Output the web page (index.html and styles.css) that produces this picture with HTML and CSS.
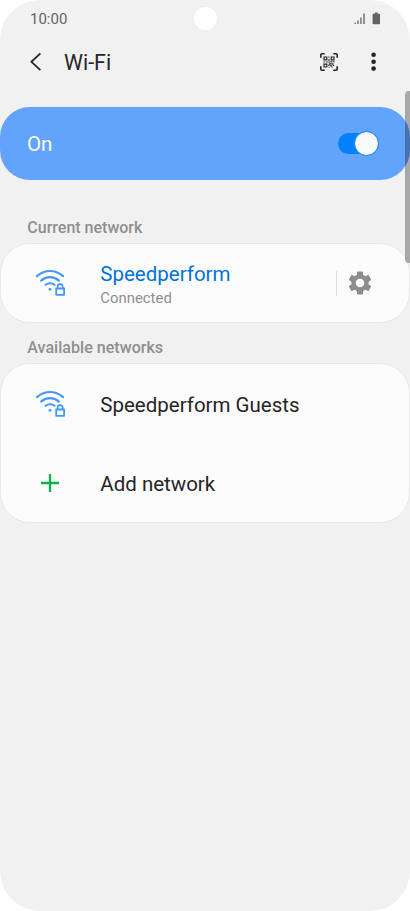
FILE: index.html
```html
<!DOCTYPE html>
<html lang="en">
<head>
<meta charset="utf-8">
<title>Wi-Fi</title>
<link rel="stylesheet" href="styles.css">
</head>
<body>
<svg class="defs" width="0" height="0" aria-hidden="true">
  <symbol id="wifi-lock" viewBox="0 0 30 28">
    <g fill="none" stroke="#4397fc" stroke-width="2.100" stroke-linecap="round">
      <path d="M1.9 7.1Q8 2 15 2T28.1 7.1"/>
      <path d="M6.1 11.600Q10 8.100 15 8.100T23.900 11.600"/>
      <path d="M10.500 15.800Q12.400 14.300 15 14.300T19.500 15.800"/>
      <path d="M21.200 19.500h7.900v6.300h-7.900z" stroke-width="1.800" stroke-linejoin="round"/>
      <path d="M22.600 19.200v-1.500a2.550 2.550 0 0 1 5.100 0v1.500" stroke-width="1.700"/>
    </g>
    <circle cx="15" cy="20.300" r="1.400" fill="#4397fc"/>
  </symbol>
</svg>
<main class="phone">
  <div class="status">
    <span class="time">10:00</span>
    <span class="camera"></span>
    <svg class="status-icons" width="28" height="14" viewBox="0 0 28 14">
      <g fill="#646464">
        <path d="M.5 10.500h1.300V12H.5zM3.300 8.500h1.300V12H3.300zM6.300 5.500h1.300V12H6.300zM9.300 1.500h1.400V12H9.300z"/>
        <path d="M20.800.5h3v1.300h1.400q.8 0 .8.8v8.900q0 .8-.8.8h-5.800q-.8 0-.8-.8V2.600q0-.8.800-.8h1.400z"/>
      </g>
    </svg>
  </div>
  <header class="header">
    <svg class="back" width="14" height="20" viewBox="0 0 14 20"><path d="M12.400 1.400L3.400 9.800L12.400 18.200" fill="none" stroke="#252525" stroke-width="1.800"/></svg>
    <h1 class="title">Wi-Fi</h1>
    <svg class="qr" width="18" height="18" viewBox="0 0 18 18">
      <path d="M.8 4.700V2Q.8.8 2 .8h2.700M13.300.8H16q1.200 0 1.200 1.200v2.700M17.200 13.300V16q0 1.200-1.200 1.200h-2.700M4.700 17.200H2Q.8 17.200.8 16v-2.700" fill="none" stroke="#252525" stroke-width="1.600"/>
      <path d="M4 4h2.800v2.800H4zM11.200 4H14v2.800h-2.800zM4 11.200h2.800V14H4z" fill="none" stroke="#252525" stroke-width="1.200"/>
      <path d="M8.400 3.400h1.100v1.300H8.400zM8.400 5.900h1.100v2H8.400zM3.400 8.400h1.300v1.200H3.400zM5.700 8.400h2v1.200h-2zM8.500 8.500h1.400v1.200H8.500zM10.500 8h1.300v1.500h-1.300zM12.500 8.300h2v1h-2zM9.300 10h1.500v1.700H9.300zM8.300 11.600h1.200v1.300H8.300zM11.300 10.300h2.200v1.200h-2.200zM10.300 12h1.500v1.500h-1.500zM12.700 11.800h1.500v1.100h-1.500zM11.500 13.500h1.200v1.100h-1.200zM8.500 13.700h1.200v.9H8.500z" fill="#252525"/>
    </svg>
    <svg class="more" width="6" height="20" viewBox="0 0 6 20"><g fill="#252525"><circle cx="2.600" cy="2.800" r="2.300"/><circle cx="2.600" cy="9.700" r="2.300"/><circle cx="2.600" cy="16.600" r="2.300"/></g></svg>
  </header>
  <section class="power">
    <span class="power-text">On</span>
    <span class="switch"><span class="knob"></span></span>
  </section>
  <h2 class="label label-current">Current network</h2>
  <section class="card">
    <div class="row">
      <svg class="icon" width="30" height="28"><use href="#wifi-lock"/></svg>
      <div class="network">
        <span class="name active">Speedperform</span>
        <span class="state">Connected</span>
      </div>
      <span class="divider"></span>
      <svg class="gear" width="24" height="24" viewBox="0 0 24 24"><path transform="translate(12 12) scale(1.190) translate(-12 -12)" fill="#8d8d8d" d="M19.140 12.940c.04-.3.060-.61.060-.94 0-.32-.02-.64-.07-.94l2.030-1.580c.18-.14.230-.41.120-.61l-1.920-3.320c-.12-.22-.37-.29-.59-.22l-2.390.96c-.5-.38-1.030-.7-1.620-.94l-.36-2.540c-.04-.24-.24-.41-.48-.41h-3.840c-.24 0-.43.170-.47.410l-.36 2.540c-.59.240-1.130.57-1.620.94l-2.390-.96c-.22-.08-.47 0-.59.220L2.740 8.870c-.12.210-.08.470.120.610l2.030 1.580c-.05.300-.09.630-.09.940s.02.640.07.940l-2.030 1.580c-.18.140-.23.410-.12.610l1.920 3.320c.12.220.37.290.59.220l2.390-.96c.5.380 1.030.7 1.620.94l.36 2.540c.05.240.24.410.48.410h3.840c.24 0 .44-.17.470-.41l.36-2.540c.59-.24 1.130-.56 1.620-.94l2.390.96c.22.080.47 0 .59-.22l1.920-3.320c.12-.22.070-.47-.12-.61l-2.010-1.580zM12 15.600c-1.980 0-3.600-1.620-3.600-3.600s1.620-3.600 3.600-3.600 3.600 1.620 3.600 3.600-1.620 3.600-3.600 3.600z"/></svg>
    </div>
  </section>
  <h2 class="label label-available">Available networks</h2>
  <section class="card">
    <div class="row">
      <svg class="icon" width="30" height="28"><use href="#wifi-lock"/></svg>
      <span class="name">Speedperform Guests</span>
    </div>
    <div class="row">
      <svg class="icon" width="30" height="28" viewBox="0 0 30 28"><path d="M15 5v18M6 14h18" stroke="#0cb14b" stroke-width="2.300"/></svg>
      <span class="name">Add network</span>
    </div>
  </section>
  <span class="scrollbar"></span>
</main>
</body>
</html>
```
FILE: styles.css
```css
* { box-sizing: border-box; }
body { margin: 0; background: #fff; font-family: Roboto, sans-serif; color: #252525; }
.defs { position: absolute; }
.phone { position: relative; height: 911px; overflow: hidden; border-radius: 40px; background: #f1f1f1; }
.status { display: grid; grid-template-columns: 1fr 23px 1fr; align-items: center; height: 38px; padding: 0 28px 0 30px; }
.time { font-size: 15px; color: #646464; }
.camera { width: 23px; height: 23px; margin: 0 0 1px -1px; border-radius: 50%; background: #fff; }
.status-icons { justify-self: end; }
.header { display: flex; align-items: center; height: 69px; padding: 0 33px 22px 28px; }
.title { flex: 1; margin: 3px 0 0 22px; font-size: 21.400px; line-height: 24px; font-weight: 400; }
.qr { margin-right: 33px; }
.more { margin-right: 0.500px; }
.power { display: flex; align-items: center; justify-content: space-between; height: 73px; padding: 0 31px 0 27px; border-radius: 30px; background: #62a3fc; color: #fafafa; font-size: 20.500px; }
.power-text { padding-top: 1px; }
.switch { display: flex; align-items: center; justify-content: flex-end; width: 41px; height: 21px; border-radius: 11px; background: #0381fe; }
.knob { flex: none; width: 25px; height: 25px; border: 1px solid #0381fe; border-radius: 50%; background: #fafafa; }
.label { margin: 0; padding-left: 27.300px; font-size: 16px; line-height: 20px; font-weight: 500; color: #8f8f8f; }
.label-current { padding-top: 38px; height: 63px; }
.label-available { padding-top: 15px; height: 40px; font-size: 16.100px; }
.card { border: 1px solid #e8e8e8; border-radius: 30px; background: #fcfcfc; }
.row { display: flex; align-items: center; height: 79px; padding: 0 37px 0 34px; }
.card .row:first-child:last-child { height: 78px; }
.icon { margin-right: 35.300px; flex: none; }
.network { display: flex; flex: 1; flex-direction: column; padding-top: 2px; }
.name { padding-top: 3px; font-size: 20.500px; line-height: 26px; }
.active { padding-top: 0; color: #0072de; }
.state { padding-top: 1px; font-size: 14.900px; line-height: 20px; color: #8f8f8f; }
.divider { width: 1px; height: 25px; margin-right: 11px; background: #dedede; }
.scrollbar { position: absolute; top: 91px; right: 0; width: 5px; height: 172px; border-radius: 4px 0 0 4px; background: rgba(0, 0, 0, .3); }
```
